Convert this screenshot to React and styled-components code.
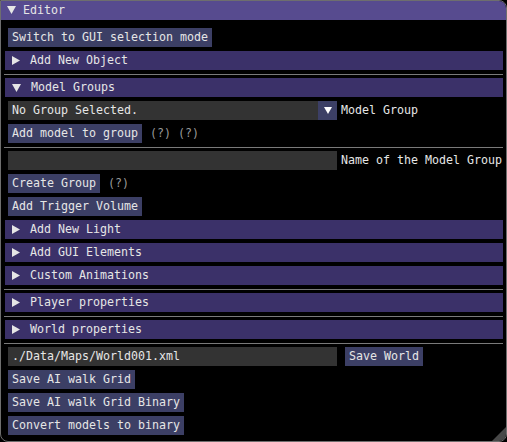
import styled, { createGlobalStyle } from "styled-components";

const GlobalStyle = createGlobalStyle`
  html, body {
    margin: 0;
    padding: 0;
    background: #000;
  }
  * {
    box-sizing: border-box;
  }
`;

const Window = styled.div`
  position: relative;
  width: 507px;
  height: 442px;
  background: #000;
  border: 1px solid #6e6e6e;
  border-radius: 0 8px 8px 8px;
  overflow: hidden;
  font-family: "DejaVu Sans Mono", "Liberation Mono", monospace;
  font-size: 11.63px;
  line-height: 19px;
  color: #e6e6e6;
  display: flex;
  flex-direction: column;
`;

const TitleBar = styled.div`
  height: 20px;
  margin: -1px 0 0 -1px;
  background: #574b8f;
  display: flex;
  align-items: center;
  gap: 7px;
  padding-left: 7px;
  flex-shrink: 0;
`;

const Body = styled.div`
  display: flex;
  flex-direction: column;
  gap: 4px;
  padding: 8px 7px 0 7px;
`;

const Row = styled.div`
  display: flex;
  align-items: center;
  height: 19px;
  gap: ${(p) => p.$gap || 8}px;
`;

const Button = styled.div`
  height: 19px;
  padding: 0 4px;
  background: #3c3f65;
  white-space: pre;
  align-self: flex-start;
  flex-shrink: 0;
`;

const Header = styled.div`
  height: 19px;
  margin: 0 -4px 0 -3px;
  background: #3b3169;
  display: flex;
  align-items: center;
  gap: 10px;
  padding-left: 7px;
  white-space: pre;
`;

const Separator = styled.div`
  height: 1px;
  margin: 0 -4px -1px -4px;
  background: #7a7a7a;
`;

const Frame = styled.div`
  width: ${(p) => p.$width}px;
  height: 19px;
  background: #333333;
  padding: 0 4px;
  white-space: pre;
  display: flex;
  flex-shrink: 0;
`;

const ComboText = styled.div`
  flex: 1;
`;

const ComboArrow = styled.div`
  width: 19px;
  height: 19px;
  margin-right: -4px;
  background: #3c3f65;
  display: flex;
  align-items: center;
  justify-content: center;
`;

const Label = styled.span`
  white-space: pre;
  flex-shrink: 0;
`;

const Help = styled.span`
  color: #9a9a9a;
  white-space: pre;
`;

const Grip = styled.svg`
  position: absolute;
  right: 0;
  bottom: 0;
`;

function Arrow({ open }) {
  return open ? (
    <svg width="9" height="8" viewBox="0 0 9 8">
      <polygon points="0,0 9,0 4.5,8" fill="#e6e6e6" />
    </svg>
  ) : (
    <svg width="8" height="9" viewBox="0 0 8 9">
      <polygon points="0,0 8,4.5 0,9" fill="#e6e6e6" />
    </svg>
  );
}

function CollapsingHeader({ open, children }) {
  return (
    <Header>
      <Arrow open={open} />
      <span>{children}</span>
    </Header>
  );
}

export default function App() {
  return (
    <>
      <GlobalStyle />
      <Window>
        <TitleBar>
          <Arrow open />
          <span>Editor</span>
        </TitleBar>
        <Body>
          <Button>Switch to GUI selection mode</Button>
          <CollapsingHeader>Add New Object</CollapsingHeader>
          <Separator />
          <CollapsingHeader open>Model Groups</CollapsingHeader>
          <Row $gap={4}>
            <Frame $width={329}>
              <ComboText>No Group Selected.</ComboText>
              <ComboArrow>
                <svg width="8" height="7" viewBox="0 0 8 7">
                  <polygon points="0,0 8,0 4,7" fill="#ffffff" />
                </svg>
              </ComboArrow>
            </Frame>
            <Label>Model Group</Label>
          </Row>
          <Row>
            <Button>Add model to group</Button>
            <Help>(?)</Help>
            <Help style={{ marginLeft: -1 }}>(?)</Help>
          </Row>
          <Separator />
          <Row $gap={4}>
            <Frame $width={329} />
            <Label>Name of the Model Group</Label>
          </Row>
          <Row>
            <Button>Create Group</Button>
            <Help>(?)</Help>
          </Row>
          <Button>Add Trigger Volume</Button>
          <CollapsingHeader>Add New Light</CollapsingHeader>
          <CollapsingHeader>Add GUI Elements</CollapsingHeader>
          <CollapsingHeader>Custom Animations</CollapsingHeader>
          <Separator />
          <CollapsingHeader>Player properties</CollapsingHeader>
          <Separator />
          <CollapsingHeader>World properties</CollapsingHeader>
          <Separator />
          <Row>
            <Frame $width={329}>./Data/Maps/World001.xml</Frame>
            <Button>Save World</Button>
          </Row>
          <Button>Save AI walk Grid</Button>
          <Button>Save AI walk Grid Binary</Button>
          <Button>Convert models to binary</Button>
        </Body>
        <Grip width="14" height="14" viewBox="0 0 14 14">
          <polygon points="14,0 14,14 0,14" fill="#484848" />
        </Grip>
      </Window>
    </>
  );
}
